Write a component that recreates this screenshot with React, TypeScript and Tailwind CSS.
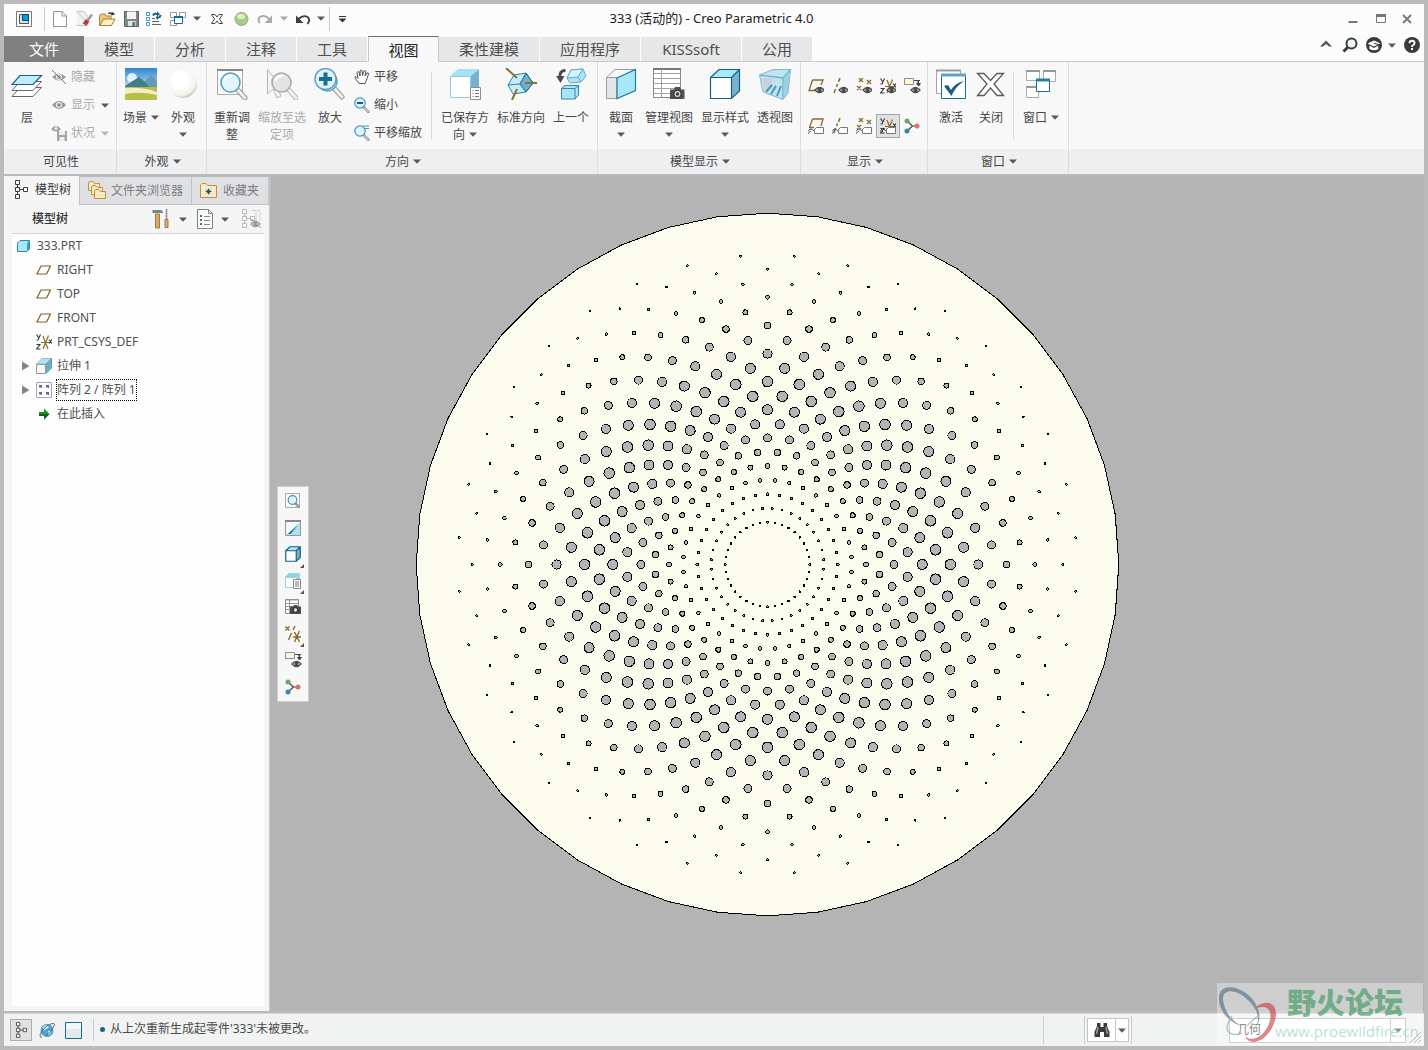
import type { ReactNode } from "react";
import clsx from "clsx";

type SvgProps = { w?: number; h?: number; children: ReactNode };

function Svg({ w = 16, h = 16, children }: SvgProps) {
	return (
		<svg
			width={w}
			height={h}
			viewBox={`0 0 ${w} ${h}`}
			fill="none"
			className="shrink-0"
			aria-hidden="true"
		>
			{children}
		</svg>
	);
}

function Caret({ className = "text-[#5a5a5a]" }: { className?: string }) {
	return (
		<svg width="8" height="5" viewBox="0 0 8 5" className={clsx("shrink-0", className)} aria-hidden="true">
			<path d="M0 0.5h8L4 4.8z" fill="currentColor" />
		</svg>
	);
}

/* ---------- shared glyphs, drawn in a 16px box ---------- */

const Eye = ({ x = 0, y = 0, color = "#4a4a4a" }) => (
	<g transform={`translate(${x} ${y})`}>
		<path d="M0 4Q4.5 -1 9 4Q4.5 9 0 4z" fill="#fff" stroke={color} strokeWidth="1.3" />
		<circle cx="4.5" cy="4" r="2.2" fill={color} />
	</g>
);

const Tag = ({ x = 0, y = 0 }) => (
	<g transform={`translate(${x} ${y})`}>
		<path d="M0 4.5Q2 0.5 4 2.5T7 2.5" stroke="#555" />
		<path d="M0 6.5L3 4" stroke="#555" />
		<path d="M6.5 6.5V2.5L8.5 0.5H15.5V6.5z" fill="#fff" stroke="#777" />
	</g>
);

const Tree = ({ color = "#3c3c3c" }) => (
	<g stroke={color}>
		<path d="M3.5 4v10M3.5 9.5h6" />
		<path d="M1.5 0.5h4v4h-4zM1.5 7.5h4v4h-4zM1.5 14.5h4v4h-4zM9.5 7.5h4v4h-4z" fill="#fafafa" />
	</g>
);

const Plane = () => (
	<Svg w={16} h={10}>
		<path d="M5 1H14.5L10.5 9H1z" stroke="#7d6128" strokeWidth="1.2" />
	</Svg>
);

const Csys = () => (
	<>
		<path d="M5 8.5h8M7 2l5 13M12.5 1.5L7 15" stroke="#8a6b2c" strokeWidth="1.2" />
		<path
			d="M0.5 0.5l2 3M4.5 0.5L2 6H0.5M0.5 10.5h3.5L0.5 15h4M13 5.5l3 4M16 5.5l-3 4"
			stroke="#333"
			strokeWidth="1.1"
		/>
	</>
);

const Magnifier = ({ x = 0, y = 0, grey = false }) => (
	<g transform={`translate(${x} ${y})`}>
		<path d="M17 17L25 26" stroke={grey ? "#b8b8b8" : "#999"} strokeWidth="5" strokeLinecap="round" />
		<path d="M17 17L25 26" stroke="#f0f0f0" strokeWidth="3" strokeLinecap="round" />
		<circle
			cx="10.5"
			cy="10.5"
			r="9.5"
			fill={grey ? "#e4e4e4" : "#e0f5fd"}
			stroke={grey ? "#aaa" : "#5d9fc0"}
			strokeWidth="1.6"
		/>
		<path d="M4 9Q6 3.5 12 4" stroke="#fff" strokeWidth="2.5" />
	</g>
);

const SmallGlass = () => (
	<>
		<path d="M10 10.500L14.500 15" stroke="#999" strokeWidth="2.6" strokeLinecap="round" />
		<path d="M10.5 11L14.5 15" stroke="#eee" strokeLinecap="round" />
		<circle cx="6" cy="6" r="5.2" fill="#dff4fc" stroke="#4a93b5" strokeWidth="1.2" />
	</>
);

const Nodes = () => (
	<Svg>
		<path d="M3 3l5.5 5L3 13M8.5 8H13" stroke="#444" strokeWidth="1.2" />
		<circle cx="3" cy="3" r="2.5" fill="#66a866" />
		<circle cx="3" cy="13" r="2.5" fill="#3b87ab" />
		<circle cx="13" cy="8" r="2.5" fill="#e0706b" />
	</Svg>
);

const TagEye = () => (
	<Svg w={17}>
		<path d="M0.5 0.5h9v6h-9z" fill="#fff3da" stroke="#8f8f8f" />
		<path d="M10 2.5h6M13 2.5h1.5v5M12.5 5.5l2 2.5 2-2.5z" stroke="#444" fill="#444" />
		<Eye x={7} y={8} />
	</Svg>
);

const Camera = ({ x = 0, y = 0 }) => (
	<g transform={`translate(${x} ${y})`}>
		<path d="M0 2.5h4L5 0h5l1 2.5h3.5V12H0z" fill="#505050" />
		<circle cx="7.5" cy="7" r="3.7" fill="#ddd" stroke="#222" />
		<circle cx="7.5" cy="7" r="1.8" fill="#444" />
	</g>
);

const Cube = ({ s = 32 }: { s?: number }) => (
	<svg width={s} height={s} viewBox="0 0 32 32" fill="none" aria-hidden="true">
		<path d="M1.5 9.5L10 1.5H30.5L22.5 9.5z" fill="#a9e8fb" />
		<path d="M22.5 9.5L30.5 1.5V23L22.5 30.5z" fill="#78b4cf" />
		<path d="M1.5 9.5h21v21h-21z" fill="#fff" />
		<path
			d="M1.5 9.5L10 1.5H30.5V23L22.5 30.5H1.5zH22.5V30.5M22.5 9.5L30.5 1.5"
			stroke="#146080"
			strokeWidth={s < 20 ? 2.4 : 1.2}
		/>
	</svg>
);

const Folder = ({ x = 0, y = 0 }) => (
	<g transform={`translate(${x} ${y})`}>
		<path d="M0.5 9.5V1.5L2 0.5H5L6.5 2.5H11.5V9.5z" fill="#fae5b8" stroke="#b7924c" />
		<path d="M2 4.5h9" stroke="#fff4d6" />
	</g>
);

/* ---------- quick access toolbar ---------- */

const quickIcons: { name: string; box: string; icon: ReactNode }[] = [
	{
		name: "新建",
		box: "w-[26px]",
		icon: (
			<Svg w={14}>
				<path d="M0.5 0.5H9L13.5 5V15.5H0.5z" fill="#fdfdfd" stroke="#8b97a0" />
				<path d="M9 0.5V5H13.5" stroke="#8b97a0" />
			</Svg>
		),
	},
	{
		name: "重命名",
		box: "w-[22px]",
		icon: (
			<Svg w={17}>
				<path d="M0.5 0.5H7L11 4V14.5H0.5" fill="#f4f4f4" stroke="#c2c2c2" />
				<path d="M2 1L9 10" stroke="#ddd" strokeWidth="2" />
				<path d="M16 3.5L10.5 11" stroke="#9a9da0" strokeWidth="2.5" />
				<path d="M11.5 9.5L8.5 13.5" stroke="#bb3e26" strokeWidth="4.5" />
			</Svg>
		),
	},
	{
		name: "打开",
		box: "w-[25px]",
		icon: (
			<Svg w={17}>
				<path d="M0.5 14.5V4.5L2 3H6L7.5 5H12V14.5z" fill="#eac980" stroke="#a9813a" />
				<path d="M1 14.5L4.5 8H16L12.5 14.5z" fill="#fff0c4" stroke="#a9813a" />
				<path d="M8.5 3.5Q10 0 13.5 2V0.5L16 3.5L12 4.5L12.5 3.5Q10.500 2 8.5 3.5z" fill="#333" />
			</Svg>
		),
	},
	{
		name: "保存",
		box: "w-[22px]",
		icon: (
			<Svg w={15}>
				<path d="M0.5 0.5H14.5V15.5H0.5z" fill="#85888b" stroke="#5e6164" />
				<path d="M3 0.5H12V8H3z" fill="#f1f6f9" />
				<path d="M4 10H11.5V15H4z" fill="#dfe6ea" />
				<path d="M8.5 11H10.5V15H8.5z" fill="#2c5f7b" />
			</Svg>
		),
	},
	{
		name: "重新生成",
		box: "w-[24px]",
		icon: (
			<Svg>
				<path d="M0.5 1.5h3v3h-3zM0.5 6.5h3v3h-3zM0.5 11.5h3v3h-3z" stroke="#3d9bc4" />
				<path d="M6 10.5h7M6 13.5h9M6 7.5h3" stroke="#666" />
				<path
					d="M6 4Q8 1 11 2V0.5L14 3L11 5.5V4Q9 3 8 5zM15.5 4Q15 7.5 12 7.5V9L9.5 6.5L12 4.5V6Q13 6 13.5 4z"
					fill="#176085"
				/>
			</Svg>
		),
	},
	{
		name: "窗口",
		box: "w-[24px]",
		icon: (
			<Svg>
				<path d="M0.5 1.5h6v5h-6zM9.5 1.5h6v5h-6zM0.5 9.5h6v5h-6z" fill="#fff" stroke="#999" />
				<path d="M4.5 5.5h8v7h-8z" fill="#fff" stroke="#176d90" />
				<path d="M4 6h9" stroke="#176d90" strokeWidth="2" />
			</Svg>
		),
	},
	{ name: "窗口列表", box: "w-[14px]", icon: <Caret /> },
	{
		name: "关闭",
		box: "w-[26px]",
		icon: (
			<Svg w={12} h={10}>
				<path d="M0.5 0.5H4L6 3L8 0.5H11.5L8.5 5L11.5 9.5H8L6 7L4 9.5H0.5L3.5 5z" fill="#fff" stroke="#444" />
			</Svg>
		),
	},
	{
		name: "状况",
		box: "w-[22px]",
		icon: (
			<Svg w={15}>
				<circle cx="7.5" cy="8" r="6.5" fill="#a5cf80" stroke="#9aa492" />
				<ellipse cx="7" cy="5.5" rx="4" ry="2.5" fill="#dcf0c8" />
			</Svg>
		),
	},
	{
		name: "重做",
		box: "w-[26px]",
		icon: (
			<Svg w={16} h={12}>
				<path d="M3 10Q0 6 3 4Q8 1 12 6" stroke="#a5a5a5" strokeWidth="1.9" />
				<path d="M15 2.5V10H7.5z" fill="#aaa" />
			</Svg>
		),
	},
	{ name: "重做列表", box: "w-[12px]", icon: <Caret className="text-[#a9a9a9]" /> },
	{
		name: "撤消",
		box: "w-[26px]",
		icon: (
			<Svg w={16} h={12}>
				<path d="M12.5 11Q16 6.5 12.500 4Q8 1.500 3.500 6" stroke="#3e3e3e" strokeWidth="1.9" />
				<path d="M1 2.5V10H8.5z" fill="#3e3e3e" />
			</Svg>
		),
	},
	{ name: "撤消列表", box: "w-[10px]", icon: <Caret /> },
];

function TitleBar() {
	return (
		<header className="flex h-8 items-center bg-[#fcfcfc] pb-[3px]">
			<div className="flex flex-1 items-center">
				<span className="flex w-10 justify-center">
					<Svg>
						<path d="M0.5 0.5h15v15h-15z" fill="#fff" stroke="#777" />
						<path d="M3.5 3.5h9v9h-9z" fill="#d5e4ec" stroke="#555" />
						<path d="M6.500 3.500h6v6h-6z" fill="#0f9ae0" stroke="#17425c" />
					</Svg>
				</span>
				<span className="mr-0.5 h-6 w-px bg-[#c9c9c9]" />
				{quickIcons.map((q) => (
					<button
						key={q.name}
						type="button"
						aria-label={q.name}
						className={clsx("flex h-6 items-center justify-center", q.box)}
					>
						{q.icon}
					</button>
				))}
				<span className="ml-[3px] h-6 w-px bg-[#c9c9c9]" />
				<button type="button" aria-label="自定义快速访问工具栏" className="flex w-6 justify-center">
					<Svg w={9} h={8}>
						<path d="M1 1.5h7" stroke="#333" />
						<path d="M0.5 3.500h8L4.500 7.500z" fill="#333" />
					</Svg>
				</button>
			</div>
			<h1 className="text-[13px] text-[#222]">333 (活动的) - Creo Parametric 4.0</h1>
			<div className="flex flex-1 justify-end pr-[5px]">
				<button type="button" aria-label="最小化" className="flex h-6 w-7 items-center justify-center">
					<Svg w={10} h={10}>
						<path d="M0.5 8h9" stroke="#777" strokeWidth="2" />
					</Svg>
				</button>
				<button type="button" aria-label="最大化" className="flex h-6 w-7 items-center justify-center">
					<Svg w={10} h={10}>
						<path d="M0.5 1.5h9v7h-9z" stroke="#777" />
						<path d="M0 1.5h10" stroke="#777" strokeWidth="3" />
					</Svg>
				</button>
				<button type="button" aria-label="关闭窗口" className="flex h-6 w-6 items-center justify-center">
					<Svg w={10} h={10}>
						<path d="M1 1l8 8M9 1L1 9" stroke="#777" strokeWidth="1.8" />
					</Svg>
				</button>
			</div>
		</header>
	);
}

/* ---------- ribbon tabs ---------- */

const tabs = ["模型", "分析", "注释", "工具", "视图", "柔性建模", "应用程序", "KISSsoft", "公用"];

function RibbonTabs() {
	return (
		<nav className="flex h-[26px] items-stretch bg-[#fcfcfc] text-[15px] leading-6 text-[#4f4f4f]">
			<button type="button" className="w-20 bg-[#808080] text-white">
				文件
			</button>
			{tabs.map((tab) => (
				<button
					key={tab}
					type="button"
					className={clsx(
						tab.length > 2 ? "w-[101px]" : "w-[71px]",
						tab === "视图"
							? "border-x border-t border-x-[#c9c9c9] border-t-[#6c6c6c] bg-[#f8f8f8] text-[#222]"
							: "mt-px border-r border-b border-r-white border-b-[#c9cacc] bg-[#e6e7e9]",
					)}
				>
					{tab}
				</button>
			))}
			<div className="flex flex-1 items-start justify-end border-b border-[#c9cacc] pr-1">
				<button type="button" aria-label="最小化功能区" className="flex h-4 w-6 items-center justify-center">
					<Svg w={12} h={8}>
						<path d="M0 6.5L6 0.500L12 6.5H9L6 4L3 6.500z" fill="#555" />
					</Svg>
				</button>
				<button type="button" aria-label="搜索" className="flex h-[18px] w-6 items-center justify-center">
					<Svg>
						<circle cx="9.5" cy="6.5" r="5" fill="#eef7fb" stroke="#3c3c3c" strokeWidth="2" />
						<path d="M6 10L1.5 14.5" stroke="#3c3c3c" strokeWidth="3" />
					</Svg>
				</button>
				<button type="button" aria-label="学习中心" className="flex h-[18px] w-6 items-center justify-center">
					<Svg>
						<circle cx="8" cy="8" r="8" fill="#3a3a3c" />
						<path d="M1.5 6.5L8 3.5L14.5 6.5L8 9.5z" fill="#fff" />
						<path d="M3.500 8.500v3.500q4.500 2.500 9 0V8.500L8 11z" fill="#fff" />
						<path d="M8 6.500l5 1v4" stroke="#3a3a3c" />
					</Svg>
				</button>
				<button type="button" aria-label="学习中心列表" className="flex h-[18px] w-3 items-center justify-center">
					<Caret />
				</button>
				<button type="button" aria-label="帮助" className="flex h-[18px] w-[22px] items-center justify-end">
					<Svg>
						<circle cx="8" cy="8" r="8" fill="#3a3a3c" />
						<path d="M5.5 6.2Q5.5 3.7 8 3.7T10.5 6Q10.5 7.3 9.2 8T8 10" stroke="#fff" strokeWidth="1.9" />
						<path d="M7 11h2v2h-2z" fill="#fff" />
					</Svg>
				</button>
			</div>
		</nav>
	);
}

/* ---------- ribbon icons ---------- */

const LayersIcon = (
	<Svg w={32} h={32}>
		<path d="M9 19.5H30.5L22 28.5H1z" fill="#fff" stroke="#666" />
		<path d="M9 13.5H30.5L22 22.5H1z" fill="#fff" stroke="#666" />
		<path d="M9 7.5H30.5L22 16.5H1z" fill="#c0ecfb" stroke="#1a6080" strokeWidth="1.2" />
	</Svg>
);

const SceneIcon = (
	<Svg w={32} h={32}>
		<defs>
			<linearGradient id="sky" x1="0" y1="0" x2="0" y2="1">
				<stop offset="0" stopColor="#2c86cf" />
				<stop offset="1" stopColor="#cfeaf6" />
			</linearGradient>
		</defs>
		<path d="M0 0h32v22H0z" fill="url(#sky)" />
		<circle cx="7" cy="10" r="5" fill="#fff" opacity="0.8" />
		<path d="M17 16L26 7L32 13V20H17z" fill="#6599b5" />
		<path d="M0 18L6 14L14 9L20 14L25 20H0z" fill="#3d808c" />
		<path d="M0 19h32v13H0z" fill="#b5bf45" />
		<path d="M0 20Q18 19 32 24V27Q16 23 0 26z" fill="#f2eec5" />
	</Svg>
);

const SphereIcon = (
	<Svg w={32} h={32}>
		<defs>
			<radialGradient id="ball" cx="0.4" cy="0.35" r="0.65">
				<stop offset="0.4" stopColor="#fff" />
				<stop offset="0.85" stopColor="#f3f3ea" />
				<stop offset="1" stopColor="#cfcfc4" />
			</radialGradient>
		</defs>
		<circle cx="16" cy="16" r="14" fill="url(#ball)" />
	</Svg>
);

const RefitIcon = (
	<Svg w={32} h={32}>
		<path d="M1.5 1.5h25v25h-25z" fill="#fbfbfb" stroke="#aaa" />
		<path d="M1 2h26" stroke="#888" strokeWidth="2" />
		<Magnifier x={4} y={4} />
	</Svg>
);

const ZoomSelectIcon = (
	<Svg w={32} h={32}>
		<path d="M1.5 1.5V26L7 21L11 30L15 28L11 19H16z" fill="#f4f4f4" stroke="#b5b5b5" />
		<Magnifier x={5} y={4} grey />
	</Svg>
);

const ZoomInIcon = (
	<Svg w={32} h={32}>
		<Magnifier x={3} y={3} />
		<circle cx="11.5" cy="11" r="10.5" fill="#dff3fb" stroke="#5d9fc0" strokeWidth="1.4" />
		<path d="M11.5 4.5v13M5 11h13" stroke="#157099" strokeWidth="4" />
	</Svg>
);

const SavedViewIcon = (
	<Svg w={32} h={32}>
		<path d="M1 8L9 1H30L22 8z" fill="#a5e2f5" />
		<path d="M22 8L30 1V23L22 30z" fill="#76b2cd" />
		<path d="M1.5 8.5h20v21h-20z" fill="#fff" stroke="#9fc6d6" />
		<path d="M21.5 19.5h10v12h-10z" fill="#fff" stroke="#8e8e8e" />
		<path d="M23.5 22.5h1M26 22.5h4M23.5 25.5h1M26 25.5h4M23.5 28.5h1M26 28.5h4" stroke="#777" />
	</Svg>
);

const StandardIcon = (
	<Svg w={32} h={32}>
		<path d="M3 17L9 7L21 5L28 15L21 24L8 26z" fill="#c5eefa" stroke="#2b84a8" />
		<path d="M21 5L28 15L21 24L15 16z" fill="#6fb0ca" stroke="#1c6585" />
		<path d="M3 17L15 16L21 5M15 16L21 24" stroke="#2b84a8" />
		<path d="M1 0L12 10M20 15H32M12 21L7 32" stroke="#8d6f33" strokeWidth="2" />
	</Svg>
);

const PreviousIcon = (
	<Svg w={32} h={32}>
		<path d="M12 10L16 2L28 1L31 8L26 14L15 15z" fill="#a9e4f8" stroke="#5eacc9" />
		<path d="M12 10L16 2L28 1L23 9z" fill="#d7f4fd" stroke="#5eacc9" />
		<path d="M23 9L26 14" stroke="#5eacc9" />
		<path d="M6.5 20.5L10 17.5H23.5V27L20 31H6.5z" fill="#a9e4f8" stroke="#3588ab" />
		<path d="M6.5 20.5H20V31M20 20.5L23.5 17.5" stroke="#3588ab" />
		<path d="M10.500 2.500Q4 2.500 5 10" stroke="#4a4a4a" strokeWidth="3" />
		<path d="M1 8L5.500 15L9.500 8z" fill="#4a4a4a" />
	</Svg>
);

const SectionIcon = (
	<Svg w={32} h={32}>
		<path d="M1.5 9.5L10 1.5H30.5L12 10V30.5H1.5z" fill="#fafafa" stroke="#9b9b9b" />
		<path d="M1.5 9.5H12V30.5H1.5z" fill="#e6e6ea" stroke="#9b9b9b" />
		<path d="M12 10L30.5 1.5V22.5L12 30.5z" fill="#a9e8fb" stroke="#1e7da1" strokeWidth="1.2" />
	</Svg>
);

const ManagerIcon = (
	<Svg w={32} h={32}>
		<path d="M0.5 0.5h27v29h-27z" fill="#fff" stroke="#8a8a8a" />
		<path d="M0 1h28" stroke="#777" strokeWidth="2" />
		<path d="M1 5.5h26M1 10.5h26M1 15.5h26M1 20.5h26M1 25.5h26M8.5 1v28" stroke="#a2a2a2" />
		<Camera x={17} y={19} />
	</Svg>
);

const PerspectiveIcon = (
	<Svg w={32} h={32}>
		<path d="M0.5 7L14 1.5H31.5L29 25L24 31.5L4 24z" fill="#bfe4f0" stroke="#7fb9cf" />
		<path d="M0.5 7L24 10L31.5 1.5M24 10V31" stroke="#6bb0ca" strokeWidth="1.3" />
		<path d="M24 10L31 2L29 25L24 31z" fill="#8fc8dc" opacity="0.7" />
		<path d="M3 11L13 9V17L5 23z" fill="#c9d2de" />
		<path d="M7 24L13 17M12 26L17 18M18 28L22 18" stroke="#4a98b6" strokeWidth="2" />
	</Svg>
);

const ActivateIcon = (
	<Svg w={32} h={32}>
		<path d="M1.5 2.5h24v23h-24z" fill="#fff" stroke="#a5a5a5" />
		<path d="M1 2.5h25" stroke="#999" strokeWidth="2" />
		<path d="M6.5 6.5h24v24h-24z" fill="#fff" stroke="#176d90" />
		<path d="M6 7h25" stroke="#5ba4c2" strokeWidth="3" />
		<path d="M9 18L13 17L16 22Q20 15 29 13Q20 19 16.5 28z" fill="#155f83" />
	</Svg>
);

const CloseIcon = (
	<Svg w={32} h={32}>
		<path
			d="M2.5 5.5H9L15.5 12.5L22 5.5H28.5L19 16L28.5 27.5H22L15.5 20L9 27.5H2.5L12 16z"
			fill="#fff"
			stroke="#5a5a5a"
			strokeWidth="1.3"
		/>
	</Svg>
);

const WindowsIcon = (
	<Svg w={32} h={32}>
		<path d="M1.5 2.5h13v10h-13zM18.5 2.5h12v11h-12zM1.5 18.5h12v11h-12z" fill="#fff" stroke="#aaa" />
		<path d="M1 3h14M18 3h13M1 19h13" stroke="#999" strokeWidth="2" />
		<path d="M11.5 11.5h13v12h-13z" fill="#fff" stroke="#176d90" />
		<path d="M11 12h14" stroke="#2b7d9f" strokeWidth="3" />
	</Svg>
);

/* ---------- ribbon building blocks ---------- */

type LargeProps = {
	icon: ReactNode;
	lines: string[];
	className: string;
	arrow?: "inline" | "below";
	disabled?: boolean;
};

function LargeButton({ icon, lines, className, arrow, disabled }: LargeProps) {
	return (
		<button
			type="button"
			disabled={disabled}
			className={clsx(
				"flex shrink-0 flex-col items-center gap-[9px] pt-[6px] leading-[17px]",
				className,
				disabled && "text-[#aaaaaa]",
			)}
		>
			<span className="flex h-8 items-center">{icon}</span>
			<span className="flex flex-col items-center whitespace-nowrap">
				{lines.map((line, i) => (
					<span key={line} className="flex items-center gap-1">
						{line}
						{arrow === "inline" && i === lines.length - 1 && <Caret />}
					</span>
				))}
				{arrow === "below" && (
					<span className="flex h-[17px] items-center">
						<Caret />
					</span>
				)}
			</span>
		</button>
	);
}

type SmallProps = { icon: ReactNode; label: string; caret?: string; disabled?: boolean };

function SmallButton({ icon, label, caret, disabled }: SmallProps) {
	return (
		<button
			type="button"
			disabled={disabled}
			className={clsx("flex h-7 items-center gap-1 whitespace-nowrap", disabled && "text-[#ababab]")}
		>
			<span className="flex w-4 justify-center">{icon}</span>
			{label}
			{caret && <Caret className={clsx("ml-0.5", caret)} />}
		</button>
	);
}

type GroupProps = { title: string; className: string; caret?: boolean; children: ReactNode };

function Group({ title, className, caret = true, children }: GroupProps) {
	return (
		<section className={clsx("flex shrink-0 flex-col border-r border-[#dcdddf]", className)}>
			<div className="flex h-[87px] items-stretch">{children}</div>
			<div className="flex h-[25px] items-center justify-center gap-1 bg-[#eeeff1] pl-0.5">
				{title}
				{caret && <Caret />}
			</div>
		</section>
	);
}

const Divider = () => <span className="mt-2.5 h-[67px] w-px bg-[#d9d9d9]" />;

const displayToggles: { name: string; on?: boolean; icon: ReactNode }[] = [
	{
		name: "平面显示",
		icon: (
			<Svg>
				<path d="M4.5 2H15L13 7M8 12.5H1L4.5 2" stroke="#8a6b2c" strokeWidth="1.3" />
				<Eye x={7} y={8} />
			</Svg>
		),
	},
	{
		name: "轴显示",
		icon: (
			<Svg>
				<path d="M8 0L6.5 4M5.5 6L4.5 9M3.5 11L2 15" stroke="#8a6b2c" strokeWidth="1.5" />
				<Eye x={7} y={8} />
			</Svg>
		),
	},
	{
		name: "点显示",
		icon: (
			<Svg>
				<path
					d="M3 0l4 4M7 0L3 4M11 2l4 4M15 2l-4 4M1 8l4 4M5 8l-4 4"
					stroke="#8a6b2c"
					strokeWidth="1.4"
				/>
				<Eye x={7} y={8} />
			</Svg>
		),
	},
	{
		name: "坐标系显示",
		icon: (
			<Svg>
				<Csys />
				<Eye x={7} y={8} />
			</Svg>
		),
	},
	{ name: "注释显示", icon: <TagEye /> },
	{
		name: "平面标记",
		icon: (
			<Svg>
				<path d="M4.5 1H15L13 8M6 9.5H1.500L4.5 1" stroke="#8a6b2c" strokeWidth="1.3" />
				<Tag y={9} />
			</Svg>
		),
	},
	{
		name: "轴标记",
		icon: (
			<Svg>
				<path d="M8 0L6.5 4M5.5 5.5L4.5 8M3.5 10L2 15" stroke="#8a6b2c" strokeWidth="1.5" />
				<Tag y={9} />
			</Svg>
		),
	},
	{
		name: "点标记",
		icon: (
			<Svg>
				<path
					d="M3 0l4 4M7 0L3 4M11 2l4 4M15 2l-4 4M1 7l4 4M5 7l-4 4"
					stroke="#8a6b2c"
					strokeWidth="1.4"
				/>
				<Tag y={9} />
			</Svg>
		),
	},
	{
		name: "坐标系标记",
		on: true,
		icon: (
			<Svg>
				<Csys />
				<Tag y={9} />
			</Svg>
		),
	},
	{ name: "旋转中心", icon: <Nodes /> },
];

function Ribbon() {
	return (
		<div className="flex overflow-hidden bg-[linear-gradient(#f8f8f8_87px,#eeeff1_87px)] text-xs text-[#464646]">
			<Group title="可见性" className="w-[113px]" caret={false}>
				<LargeButton icon={LayersIcon} lines={["层"]} className="w-[46px]" />
				<div className="flex flex-col pt-px pl-px">
					<SmallButton
						disabled
						label="隐藏"
						icon={
							<Svg>
								<path d="M1 8Q8 1 15 8Q8 15 1 8z" fill="#9c9c9c" />
								<circle cx="8" cy="8" r="3" fill="#eee" />
								<circle cx="8" cy="8" r="1.8" fill="#999" />
								<path d="M1 1L15 15" stroke="#777" />
							</Svg>
						}
					/>
					<SmallButton
						disabled
						label="显示"
						caret="text-[#5a5a5a]"
						icon={
							<Svg>
								<path d="M1 8Q8 0 15 8Q8 16 1 8z" fill="#9c9c9c" />
								<circle cx="8" cy="8" r="3" fill="#eee" />
								<circle cx="8" cy="8" r="1.8" fill="#888" />
							</Svg>
						}
					/>
					<SmallButton
						disabled
						label="状况"
						caret="text-[#b5b5b5]"
						icon={
							<Svg>
								<path d="M0 4Q5 -2 10 4Q5 9 0 4z" fill="#a2a2a2" />
								<circle cx="5" cy="3.5" r="1.5" fill="#eee" />
								<path d="M6 6h10v10h-10z" fill="#a5a5a5" />
								<path d="M8 6h6v4h-6zM8.500 12h5v4h-5z" fill="#eee" />
							</Svg>
						}
					/>
				</div>
			</Group>
			<Group title="外观" className="w-[90px]">
				<LargeButton icon={SceneIcon} lines={["场景"]} arrow="inline" className="w-[48px]" />
				<LargeButton icon={SphereIcon} lines={["外观"]} arrow="below" className="w-[36px]" />
			</Group>
			<Group title="方向" className="w-[391px]">
				<LargeButton icon={RefitIcon} lines={["重新调", "整"]} className="w-[50px]" />
				<LargeButton icon={ZoomSelectIcon} lines={["缩放至选", "定项"]} disabled className="w-[50px]" />
				<LargeButton icon={ZoomInIcon} lines={["放大"]} className="w-[46px]" />
				<div className="flex w-[78px] flex-col pt-px pl-px">
					<SmallButton
						label="平移"
						icon={
							<Svg>
								<path
									d="M5 14.5L1 9Q0.5 7.5 2 7.5L4 9.5L3 3.5Q3.5 2 5 3L6 7L6.2 1.5Q7 0 8 1.5L8.5 6.5L10 1.8Q11.5 1 11.8 2.5L11 7L13 4Q14.5 3.5 14.5 5L12.5 11L11 14.5z"
									fill="#fff"
									stroke="#555"
								/>
							</Svg>
						}
					/>
					<SmallButton
						label="缩小"
						icon={
							<Svg>
								<SmallGlass />
								<path d="M3 6h6" stroke="#105f84" strokeWidth="2" />
							</Svg>
						}
					/>
					<SmallButton
						label="平移缩放"
						icon={
							<Svg>
								<SmallGlass />
								<path d="M9 1h6M10 3.5h5" stroke="#3d9dc6" />
							</Svg>
						}
					/>
				</div>
				<Divider />
				<LargeButton icon={SavedViewIcon} lines={["已保存方", "向"]} arrow="inline" className="ml-1.5 w-[54px]" />
				<LargeButton icon={StandardIcon} lines={["标准方向"]} className="w-[58px]" />
				<LargeButton icon={PreviousIcon} lines={["上一个"]} className="w-[42px]" />
			</Group>
			<Group title="模型显示" className="w-[203px]">
				<LargeButton icon={SectionIcon} lines={["截面"]} arrow="below" className="w-[46px]" />
				<LargeButton icon={ManagerIcon} lines={["管理视图"]} arrow="below" className="w-[50px]" />
				<LargeButton icon={<Cube />} lines={["显示样式"]} arrow="below" className="w-[62px]" />
				<LargeButton icon={PerspectiveIcon} lines={["透视图"]} className="w-[38px]" />
			</Group>
			<Group title="显示" className="w-[127px]">
				<div className="grid grid-cols-5 content-start gap-y-4 pt-3 pl-[3px]">
					{displayToggles.map((t) => (
						<button
							key={t.name}
							type="button"
							aria-label={t.name}
							aria-pressed={Boolean(t.on)}
							className={clsx(
								"flex size-6 items-center justify-center",
								t.on && "border border-[#a5a7a9] bg-[#dfe1e3]",
							)}
						>
							{t.icon}
						</button>
					))}
				</div>
			</Group>
			<Group title="窗口" className="w-[141px]">
				<LargeButton icon={ActivateIcon} lines={["激活"]} className="ml-0.5 w-[42px]" />
				<LargeButton icon={CloseIcon} lines={["关闭"]} className="w-[38px]" />
				<span className="w-1.5" />
				<Divider />
				<LargeButton icon={WindowsIcon} lines={["窗口"]} arrow="inline" className="w-[54px]" />
			</Group>
		</div>
	);
}

/* ---------- model tree ---------- */

const CsysIcon = (
	<Svg w={17}>
		<Csys />
	</Svg>
);

const treeRows: { label: string; icon: ReactNode; expandable?: boolean; focused?: boolean }[] = [
	{ label: "RIGHT", icon: <Plane /> },
	{ label: "TOP", icon: <Plane /> },
	{ label: "FRONT", icon: <Plane /> },
	{ label: "PRT_CSYS_DEF", icon: CsysIcon },
	{
		label: "拉伸 1",
		expandable: true,
		icon: (
			<Svg>
				<path d="M0.5 6L6 0.5H15.5L10 6z" fill="#b5e3f2" stroke="#8dbdd0" />
				<path d="M10 6L15.5 0.5V10L10 15.5z" fill="#6bb0cd" stroke="#5a9dbb" />
				<path d="M0.5 6.5h9v9h-9z" fill="#fafafa" stroke="#999" />
			</Svg>
		),
	},
	{
		label: "阵列 2 / 阵列 1",
		expandable: true,
		focused: true,
		icon: (
			<Svg>
				<path d="M0.5 0.5h15v15h-15z" fill="#fff" stroke="#a3a8ba" />
				<path d="M3 3h3v3h-3zM10 3h3v3h-3zM3 10h3v3h-3zM10 10h3v3h-3z" fill="#7560a5" />
				<path d="M3 5.500h1.500V6M10 5.500h1.500V6M3 12.500h1.500V13M10 12.500h1.500V13" stroke="#c7bbe3" />
			</Svg>
		),
	},
	{
		label: "在此插入",
		icon: (
			<Svg>
				<path d="M3 6h5V2.5L13.5 8L8 13.5V10H3z" fill="#0a9a0a" />
				<path d="M3 8h10.5L8 13.5V10H3z" fill="#1b5c1b" />
			</Svg>
		),
	},
];

function SidePanel() {
	return (
		<aside className="flex w-[266px] shrink-0 flex-col border-r border-[#c5c6c8] bg-[#f5f5f6] text-xs text-[#505050]">
			<div className="flex h-[29px] shrink-0 items-stretch bg-[#bababa]" role="tablist">
				<button
					type="button"
					role="tab"
					aria-selected="true"
					className="flex w-[75px] items-center gap-1.5 bg-[#f5f5f6] pb-0.5 pl-2.5 whitespace-nowrap text-[#3a3a3a]"
				>
					<Svg w={15} h={19}>
						<Tree />
					</Svg>
					模型树
				</button>
				<button
					type="button"
					role="tab"
					aria-selected="false"
					className="mt-px flex w-[112px] items-center gap-1 border-b border-l border-[#c2c3c5] bg-[#dfe0e2] pl-2 whitespace-nowrap text-[#7c7c82]"
				>
					<Svg w={19} h={19}>
						<Folder x={0} y={0} />
						<Folder x={3} y={4} />
						<Folder x={6} y={8} />
					</Svg>
					文件夹浏览器
				</button>
				<button
					type="button"
					role="tab"
					aria-selected="false"
					className="mt-px flex flex-1 items-center gap-1.5 border-x border-b border-[#c2c3c5] bg-[#dfe0e2] pl-2 whitespace-nowrap text-[#7c7c82]"
				>
					<Svg w={17} h={15}>
						<path d="M0.5 14.5V2L2 0.5H6L7.5 2.5H16.5V14.5z" fill="#fbeac4" stroke="#b7924c" />
						<path d="M8.5 5.5v6M5.5 8.5h6M6.5 6.5l4 4M10.5 6.5l-4 4" stroke="#125a7c" />
					</Svg>
					收藏夹
				</button>
			</div>
			<div className="mr-[5px] ml-2 flex h-[29px] shrink-0 items-center border-b border-[#cfd0d2] pl-5">
				<h2 className="flex-1 font-medium text-[#333]">模型树</h2>
				<button type="button" aria-label="设置" className="mr-2.5">
					<Svg w={17} h={20}>
						<path d="M0.5 1h9l1.5 2v1H0.5z" fill="#7c8187" />
						<path d="M3.5 5h4v14h-4z" fill="#d7ac67" stroke="#9d7c44" />
						<path d="M14.5 0v10" stroke="#8a8f94" strokeWidth="1.600" />
						<path d="M13 10.5h3v8h-3z" fill="#d7ac67" stroke="#9d7c44" />
					</Svg>
				</button>
				<button type="button" aria-label="设置列表" className="mr-2.5">
					<Caret />
				</button>
				<button type="button" aria-label="显示" className="mr-2">
					<Svg w={16} h={20}>
						<path d="M0.5 0.5H11.5L15.5 4.5V19.5H0.5z" fill="#f7fafb" stroke="#7d8287" />
						<path d="M11.5 0.5V4.5H15.5" stroke="#7d8287" />
						<path d="M3 7h2M3 11h2M3 15h2" stroke="#666" strokeWidth="2" />
						<path d="M7 7.5h6M7 11.5h6M7 15.5h6" stroke="#888" />
					</Svg>
				</button>
				<button type="button" aria-label="显示列表" className="mr-3">
					<Caret />
				</button>
				<button type="button" aria-label="隐藏树列" className="mr-0.5">
					<Svg w={21} h={20}>
						<Tree color="#b9b9b9" />
						<path d="M11 1.5h4V14M16 1.5h3V12" stroke="#d0d0d0" />
						<Eye x={10} y={11} color="#9a9a9a" />
						<path d="M10 10l10 9" stroke="#999" />
					</Svg>
				</button>
			</div>
			<ul className="mr-[5px] mb-[5px] ml-2 flex-1 overflow-hidden bg-[#fefefe]">
				<li className="flex h-6 items-center gap-[7px] pl-[5px]">
					<Svg w={13} h={12}>
						<path d="M0.5 3L3 0.5H12.5V9L10 11.5H0.5z" fill="#a9e8fb" stroke="#2c86ab" />
						<path d="M10 3L12.5 0.5V9L10 11.5z" fill="#3ea0cb" />
					</Svg>
					333.PRT
				</li>
				{treeRows.map((row) => (
					<li key={row.label} className="flex h-6 items-center pl-2">
						<span className="flex w-4 items-center">
							{row.expandable && (
								<button type="button" aria-label={`展开 ${row.label}`} className="pl-0.5">
									<Svg w={8} h={10}>
										<path d="M0 0.5L7.5 5L0 9.5z" fill="#868686" />
									</Svg>
								</button>
							)}
						</span>
						<span className="flex w-4 justify-center">{row.icon}</span>
						<span
							className={clsx(
								"ml-1 border border-dotted leading-5",
								row.focused ? "border-black" : "border-transparent",
							)}
						>
							{row.label}
						</span>
					</li>
				))}
			</ul>
		</aside>
	);
}

/* ---------- graphics area ---------- */

const CENTER = 352.5;
const RADIUS = 351.3;

const rim = Array.from({ length: 44 }, (_, i) => {
	const a = (i * 2 * Math.PI) / 44;
	return `${CENTER + RADIUS * Math.sin(a)},${CENTER - RADIUS * Math.cos(a)}`;
}).join(" ");

// 20 rings of 36 holes, every other ring turned by half a step
const holes = Array.from({ length: 20 * 36 }, (_, i) => {
	const ring = Math.floor(i / 36);
	const a = (((i % 36) * 10 + (ring % 2) * 5) * Math.PI) / 180;
	const r = 42.2 + ring * 14.06;
	return {
		x: CENTER + r * Math.sin(a),
		y: CENTER - r * Math.cos(a),
		size: 0.8 + 4.5 * Math.sin((ring * Math.PI) / 19) ** 2,
	};
});

function Disc() {
	return (
		<svg
			viewBox="0 0 705 705"
			className="mt-9 ml-[106px] w-[705px] shrink-0 self-start"
			role="img"
			aria-label="333.PRT"
			shapeRendering="crispEdges"
		>
			<polygon points={rim} fill="#fcfcee" stroke="#000" />
			{holes.map((h, i) => (
				<circle key={i} cx={h.x} cy={h.y} r={h.size} fill="#b4b4b4" stroke="#000" />
			))}
		</svg>
	);
}

const viewTools: { name: string; icon: ReactNode; menu?: boolean }[] = [
	{
		name: "重新调整",
		icon: (
			<Svg>
				<path d="M0.5 0.5h14v14h-14z" fill="#fafafa" stroke="#aaa" />
				<path d="M10 10L14.5 14.5" stroke="#999" strokeWidth="2.5" />
				<circle cx="7.5" cy="7" r="4.3" fill="#dff4fc" stroke="#4a93b5" strokeWidth="1.2" />
			</Svg>
		),
	},
	{
		name: "重画",
		icon: (
			<Svg>
				<path d="M0.5 0.5h15v15h-15z" fill="#b2dfee" stroke="#8c9aa2" />
				<path d="M1 2H15L3 13L1 14z" fill="#f2fafd" />
				<path d="M3 14L13 5L5.5 14z" fill="#176085" />
				<path d="M0 1h16" stroke="#888" strokeWidth="2" />
			</Svg>
		),
	},
	{ name: "显示样式", icon: <Cube s={16} />, menu: true },
	{
		name: "已保存方向",
		menu: true,
		icon: (
			<Svg>
				<path d="M0 4L4 0H15L12 4z" fill="#8fd3ea" />
				<path d="M12 4L15 0V10L12 14z" fill="#a5cbdb" />
				<path d="M0.5 4.5h11v10h-11z" fill="#fff" stroke="#a9cbd8" />
				<path d="M8.5 6.5h7v9h-7z" fill="#fff" stroke="#888" />
				<path d="M10 9h4M10 11h4M10 13h4" stroke="#777" />
			</Svg>
		),
	},
	{
		name: "视图管理器",
		icon: (
			<Svg>
				<path d="M0.5 0.5h13v14h-13z" fill="#fff" stroke="#888" />
				<path d="M0 1h14M1 4.5h12M1 7.5h12M1 10.5h12M4.5 1v13" stroke="#999" />
				<path d="M5 7.5h3L9 6h3l1 1.5h3V15H5z" fill="#4a4a4a" />
				<circle cx="10.5" cy="11" r="2.3" fill="#ddd" stroke="#222" />
			</Svg>
		),
	},
	{
		name: "基准显示过滤器",
		menu: true,
		icon: (
			<Svg>
				<path
					d="M0.5 0.5l4 4M4.5 0.5l-4 4M10 0L8 4M6.5 7L3.5 14M8 11h8M9.5 6l5 10M14.5 5L9.5 16"
					stroke="#8a6b2c"
					strokeWidth="1.4"
				/>
			</Svg>
		),
	},
	{ name: "注释显示", icon: <TagEye /> },
	{ name: "旋转中心", icon: <Nodes /> },
];

function GraphicsArea() {
	return (
		<main className="ml-px flex min-w-0 flex-1 items-center overflow-hidden bg-[#b4b4b4]">
			<div
				role="toolbar"
				aria-label="图形工具栏"
				className="ml-1.5 flex w-8 shrink-0 flex-col items-center border border-[#cfd0d2] bg-[#f7f7f8] py-px"
			>
				{viewTools.map((tool) => (
					<button
						key={tool.name}
						type="button"
						aria-label={tool.name}
						className="relative flex w-full items-center justify-center odd:h-[27px] even:h-[26px]"
					>
						{tool.icon}
						{tool.menu && (
							<svg width="4" height="4" viewBox="0 0 4 4" className="absolute right-1 bottom-0" aria-hidden="true">
								<path d="M4 0V4H0z" fill="#555" />
							</svg>
						)}
					</button>
				))}
			</div>
			<Disc />
		</main>
	);
}

/* ---------- status bar ---------- */

function StatusBar() {
	return (
		<footer className="mt-0.5 flex h-[33px] shrink-0 items-center border-t border-[#d5d6d8] bg-[#f1f3f3] text-xs text-[#4a4a4a]">
			<button
				type="button"
				aria-label="模型树"
				aria-pressed="true"
				className="ml-1.5 flex size-[22px] items-center justify-center border border-[#abadaf] bg-[#dfe1e3]"
			>
				<svg width="13" height="16" viewBox="0 0 15 19" fill="none" aria-hidden="true">
					<Tree />
				</svg>
			</button>
			<button type="button" aria-label="浏览器" className="ml-[7px]">
				<Svg w={17} h={17}>
					<circle cx="8" cy="8.5" r="6.500" fill="#4aa3d2" />
					<path d="M4 5q3-3 5-1t-2 3l-2 2zM9 9q3-1 3 1t-3 3z" fill="#d5ecf7" />
					<path d="M3 15.500Q-1 15 3 9T13 1.500Q17 0.500 14.500 5T7 14" stroke="#666" />
				</Svg>
			</button>
			<button type="button" aria-label="全屏" className="ml-[9px]">
				<Svg w={17} h={17}>
					<path d="M0.5 0.5h16v16h-16z" fill="#dfe9ee" stroke="#176d90" />
					<path d="M1 1h15v6H1z" fill="#f2f6f8" />
				</Svg>
			</button>
			<span className="ml-[11px] h-[22px] w-px bg-[#c9cacc]" />
			<p className="ml-1.5 flex flex-1 items-center gap-[5px] pb-0.5 whitespace-nowrap">
				<span className="size-[5px] rounded-full bg-[#1b6588]" />
				从上次重新生成起零件'333'未被更改。
			</p>
			<span className="h-7 w-px bg-[#cccdcf]" />
			<span className="ml-10 h-7 w-px bg-[#cccdcf]" />
			<div className="mx-0.5 flex h-6 w-[42px] border border-[#c5c6c8] bg-white">
				<button type="button" aria-label="查找" className="flex w-[27px] items-center justify-center">
					<Svg>
						<path d="M3 1h3.500v4H9.500V1H13v3l2.500 6v5H10v-5H6v5H0.500v-5L3 4z" fill="#3a3a3a" />
						<path d="M4 5L2.5 12M12 5l1.5 7" stroke="#999" strokeWidth="1.5" />
					</Svg>
				</button>
				<button
					type="button"
					aria-label="查找列表"
					className="flex flex-1 items-center justify-center border-l border-[#c5c6c8]"
				>
					<Caret />
				</button>
			</div>
			<span className="h-7 w-px bg-[#cccdcf]" />
			<div className="mr-[18px] ml-[97px] flex h-[25px] w-[177px] border border-[#b5b6b8] bg-white">
				<select aria-label="选择过滤器" className="min-w-0 flex-1 appearance-none bg-transparent pl-[7px] outline-none">
					<option>几何</option>
				</select>
				<span className="flex w-[15px] items-center justify-center border-l border-[#b5b6b8]">
					<Caret />
				</span>
			</div>
		</footer>
	);
}

function Watermark() {
	return (
		<div className="pointer-events-none absolute right-[5px] bottom-[5px] h-[62px] w-[206px] overflow-hidden bg-white/35">
			<div className="absolute top-0 left-0 opacity-60">
				<Svg w={60} h={62}>
					<path
						fillRule="evenodd"
						d="M2 15C2 -1 24 2 36 17C44 27 45 40 37 45C45 37 40 27 33 19C22 7 7 4 6 15C6 26 14 38 25 43C12 40 2 28 2 15z"
						fill="#4d6a83"
					/>
					<path
						fillRule="evenodd"
						d="M37 26C46 16 59 18 59 31C58 45 48 58 37 59C32 59 29 56 28 53C34 59 44 55 50 45C56 34 54 24 46 24C42 24 40 25 37 26z"
						fill="#c8383c"
					/>
					<path d="M15 33Q8 43 11 48Q16 54 25 50M30 43Q37 35 42 33" stroke="#8fa5b5" strokeWidth="1.500" />
				</Svg>
			</div>
			<p className="absolute top-1 left-[70px] text-[29px] leading-8 font-black whitespace-nowrap text-[#459d68]/70">
				野火论坛
			</p>
			<p className="absolute top-[38px] left-[58px] font-['Open_Sans',sans-serif] text-[15px] leading-5 whitespace-nowrap text-[#a5d8d0]/80">
				www.proewildfire.cn
			</p>
			<div className="absolute right-0.5 bottom-0.5">
				<Svg w={12} h={12}>
					<path d="M1 12L12 1M5 12L12 5M9 12L12 9" stroke="#b5b5b5" />
				</Svg>
			</div>
		</div>
	);
}

function App() {
	return (
		<div className="relative flex h-screen flex-col overflow-hidden bg-[#bababa] p-1 font-['Noto_Sans','Noto_Sans_CJK_SC',sans-serif]">
			<TitleBar />
			<RibbonTabs />
			<Ribbon />
			<div className="mt-0.5 flex min-h-0 flex-1">
				<SidePanel />
				<GraphicsArea />
			</div>
			<StatusBar />
			<Watermark />
		</div>
	);
}

export default App;
